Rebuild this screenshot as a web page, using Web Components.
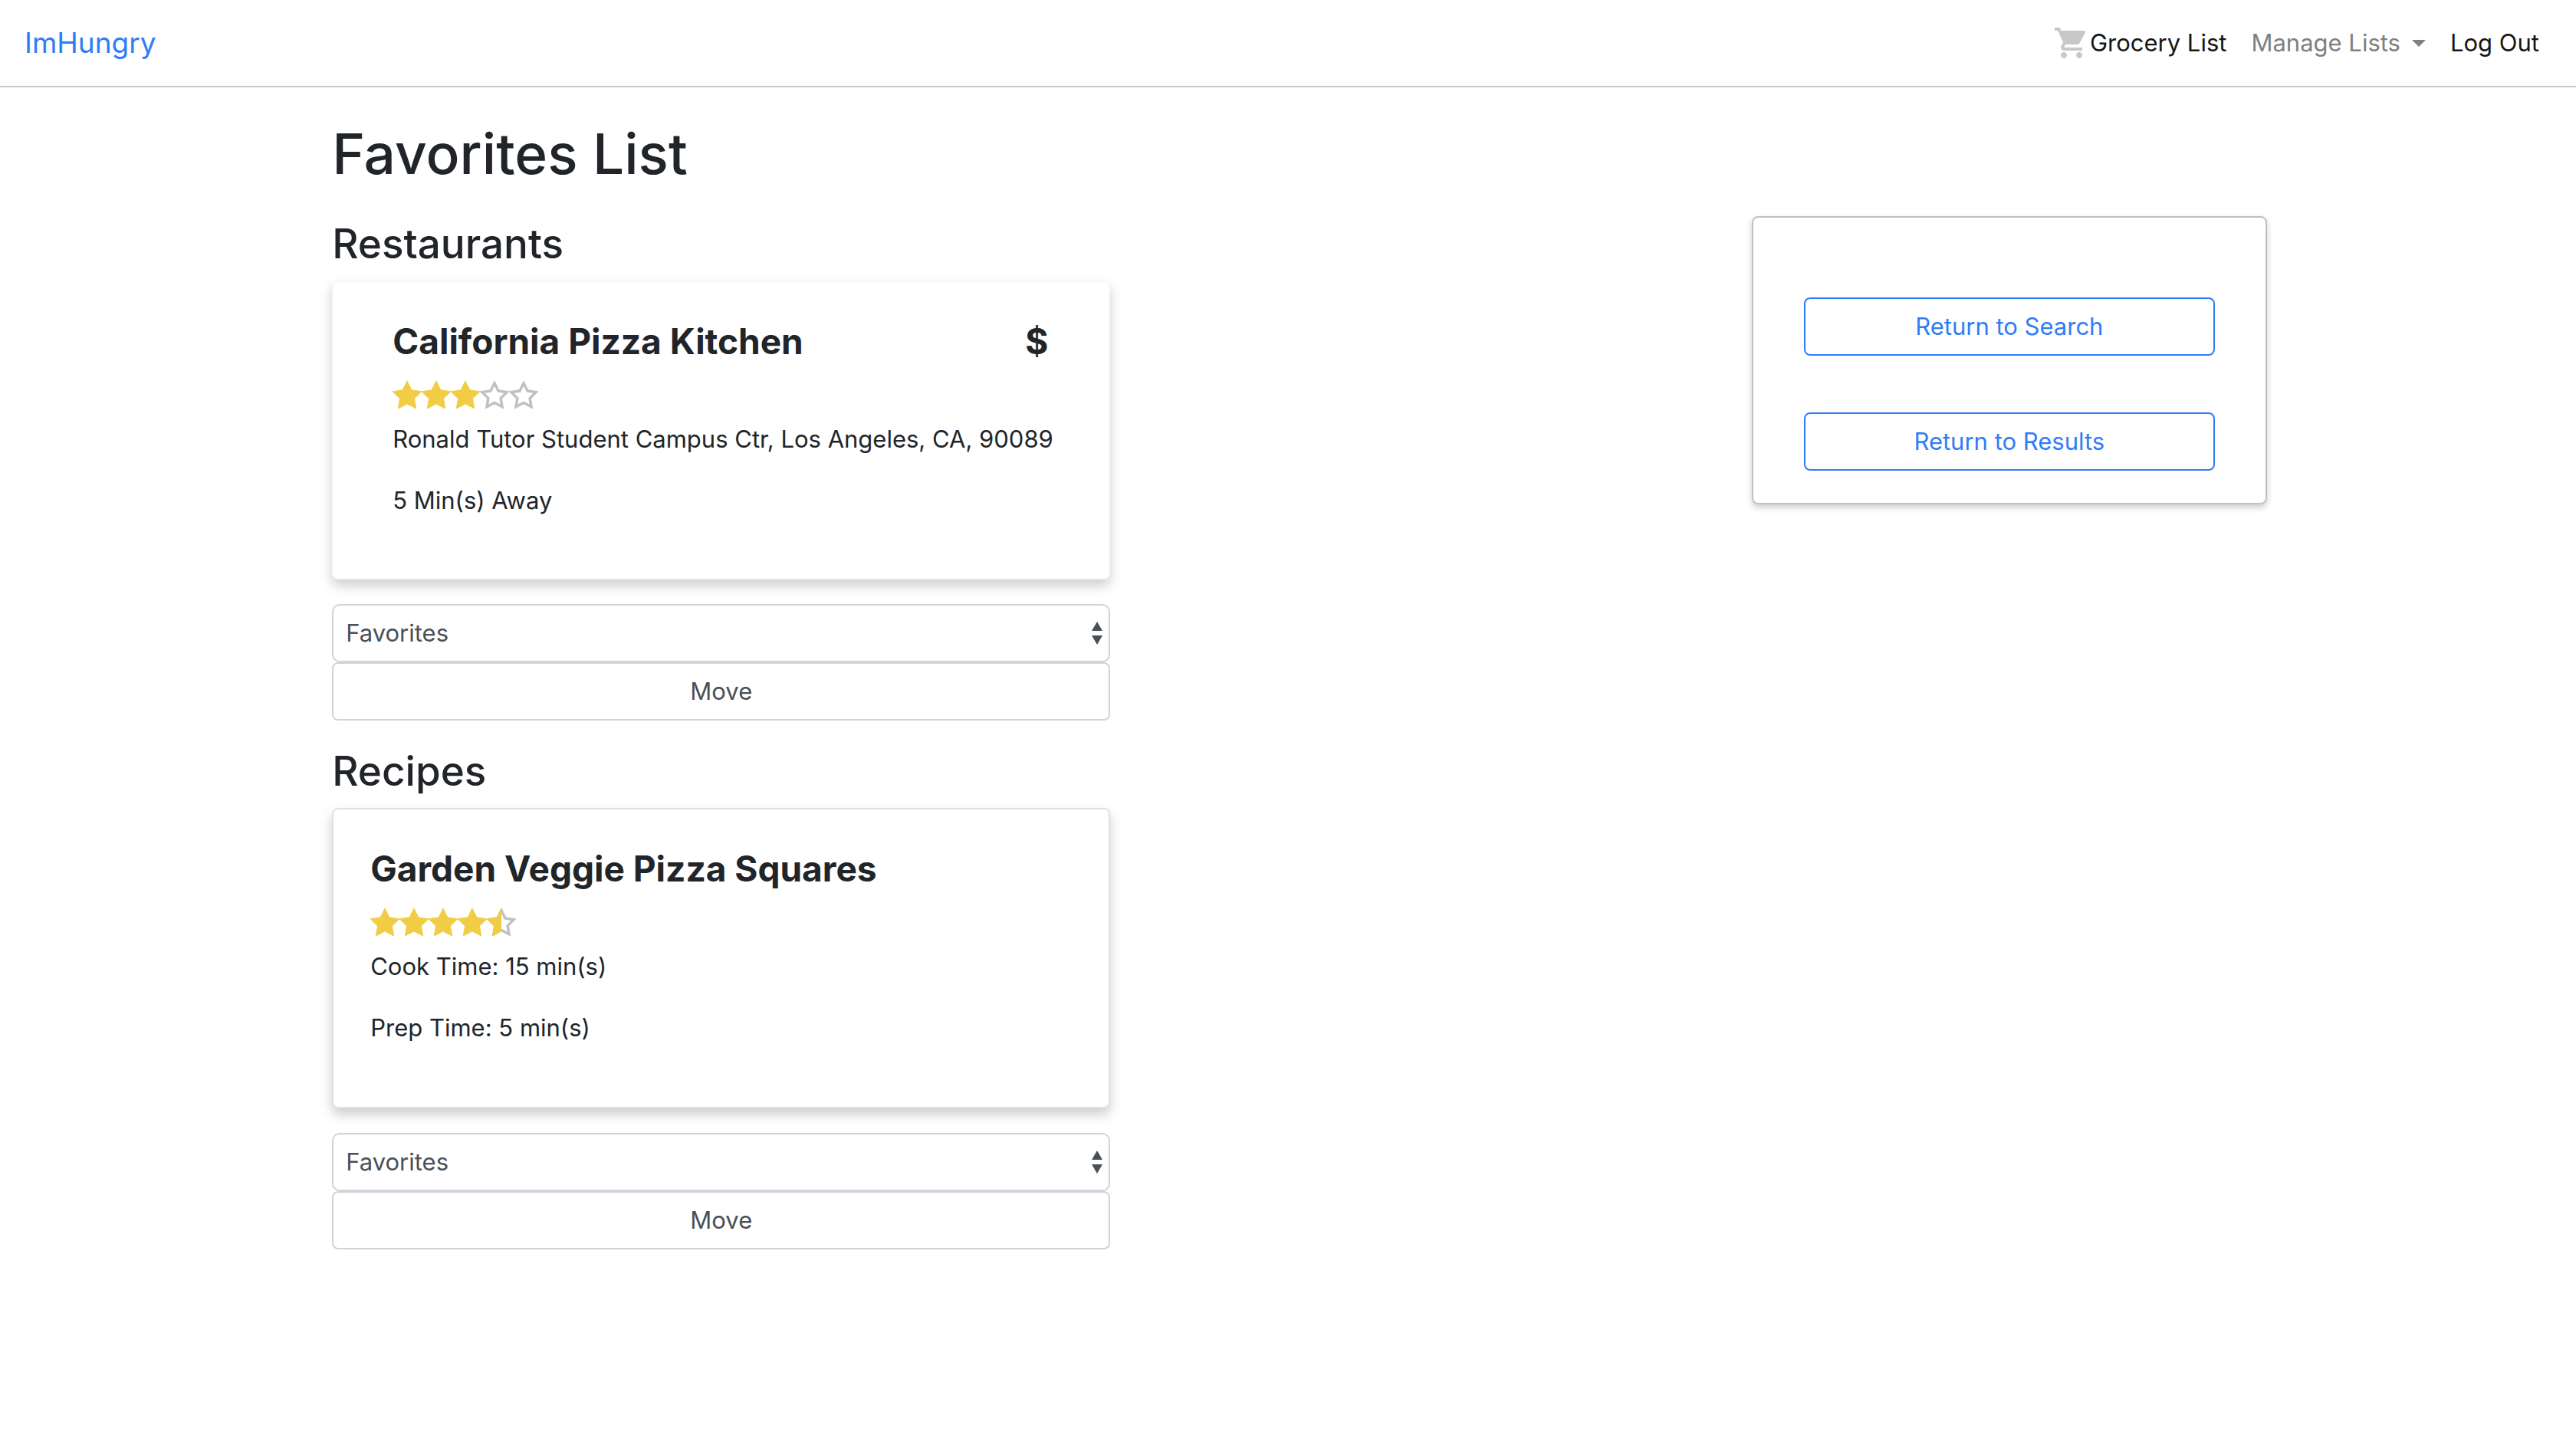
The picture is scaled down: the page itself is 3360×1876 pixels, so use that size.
<!DOCTYPE html>
<html lang="en">
<head>
<meta charset="utf-8">
<title>ImHungry - Favorites List</title>
<style>
  body {
    margin: 0;
    background: #fff;
    color: #212529;
    font: 400 31px/48px Inter, "Liberation Sans", sans-serif;
    --blue: #2f7df6;
    --field: #ced4da;
    --muted: #495057;
  }
</style>
</head>
<body>

<template id="nav-bar">
  <style>
    :host { display: block; border-bottom: 2px solid #c8c8c8; }
    nav { display: flex; align-items: center; justify-content: space-between; padding: 16px 32px; }
    a { color: #161616; text-decoration: none; }
    .brand { color: var(--blue); font-size: 37px; line-height: 60px; }
    ul { display: flex; list-style: none; margin: 0; padding: 0; }
    li a { display: flex; align-items: center; height: 48px; padding: 16px; }
    .cart { width: 48px; height: 48px; fill: #c8c8c8; }
    .menu { color: #808080; }
    .menu::after { content: ""; margin-left: 15px; border: 9px solid transparent; border-top-color: currentColor; border-bottom: 0; }
  </style>
  <nav>
    <a class="brand" href="#">ImHungry</a>
    <ul>
      <li><a href="#grocery"><svg class="cart" viewBox="0 0 24 24" aria-hidden="true"><path d="M7 18c-1.100 0-1.990.9-1.990 2S5.900 22 7 22s2-.9 2-2-.9-2-2-2zM1 2v2h2l3.600 7.590-1.350 2.450c-.16.28-.25.61-.25.96 0 1.100.9 2 2 2h12v-2H7.420c-.14 0-.25-.11-.25-.25l.03-.12.9-1.630h7.450c.75 0 1.410-.41 1.750-1.030l3.580-6.490c.08-.14.12-.31.12-.48 0-.55-.45-1-1-1H5.210l-.94-2H1zm16 16c-1.100 0-1.990.9-1.990 2s.89 2 1.990 2 2-.9 2-2-.9-2-2-2z"/></svg>Grocery List</a></li>
      <li><a class="menu" href="#lists">Manage Lists</a></li>
      <li><a href="#logout">Log Out</a></li>
    </ul>
  </nav>
</template>

<template id="star-rating">
  <style>
    :host { display: flex; }
    svg { width: 38px; height: 38px; overflow: visible; }
    path { stroke-width: 24; }
    .on { fill: #f0cd45; stroke: #f0cd45; }
    .off { fill: #c0c0c0; stroke: #c0c0c0; }
  </style>
</template>

<template id="item-card">
  <style>
    :host { display: block; border: 2px solid #f8f8f8; border-radius: 8px; background: #fff; box-shadow: 0 8px 16px rgba(0, 0, 0, .2); padding: 48px 67px 45px 77px; }
    :host([kind="recipe"]) { border-color: #dee2e6; padding: 48px 48px 47px; }
    header { display: flex; justify-content: space-between; padding-right: 12px; font-size: 46px; line-height: 58px; font-weight: 700; }
    h4 { margin: 0; font: inherit; }
    star-rating { margin: 22px 0 15px; }
    ::slotted(p) { margin: 0 0 32px; }
  </style>
  <header><h4></h4><span class="price"></span></header>
  <star-rating></star-rating>
  <slot></slot>
</template>

<template id="move-form">
  <style>
    :host { display: block; margin-top: 32px; }
    form { display: grid; }
    label { display: grid; align-items: center; }
    select, svg { grid-area: 1 / 1; }
    select, button { box-sizing: border-box; width: 100%; height: 76px; margin: 0; border: 2px solid var(--field); border-radius: 8px; background: #fff; color: var(--muted); font: inherit; }
    select { appearance: none; border-radius: 10px; padding: 12px 16px; }
    svg { justify-self: end; width: 14px; height: 30px; margin-right: 10px; fill: var(--muted); pointer-events: none; }
  </style>
  <form>
    <label>
      <select aria-label="Move to list"><option>Favorites</option><option>To Explore</option><option>Do Not Show</option></select>
      <svg viewBox="0 0 14 30" aria-hidden="true"><path d="M7 0L0 12h14zM7 30L0 18h14z"/></svg>
    </label>
    <button type="button">Move</button>
  </form>
</template>

<template id="list-section">
  <style>
    :host { display: block; }
    h3 { margin: 0 0 12px; font-size: 53px; line-height: 72px; font-weight: 500; }
  </style>
  <h3></h3>
  <slot></slot>
</template>

<template id="side-panel">
  <style>
    :host { display: flex; flex-direction: column; gap: 74px; box-sizing: border-box; width: 20vw; padding: 104px 66px 42px; border: 2px solid #c0c0c0; border-radius: 8px; box-shadow: 0 4px 8px rgba(0, 0, 0, .2); }
    ::slotted(button) { height: 76px; border: 2px solid var(--blue); border-radius: 8px; background: transparent; color: var(--blue); font: inherit; }
  </style>
  <slot></slot>
</template>

<template id="favorites-page">
  <style>
    :host { display: block; }
    main { padding: 39px 12% 64px; }
    h1 { margin: 0 30px 33px; font-size: 73px; line-height: 96px; font-weight: 500; }
    .row { display: flex; justify-content: space-between; align-items: flex-start; }
    .lists { display: flex; flex-direction: column; gap: 30px; width: calc(32vw - 60px); margin-left: 30px; }
  </style>
  <nav-bar></nav-bar>
  <main>
    <h1>Favorites List</h1>
    <div class="row">
      <div class="lists">
        <list-section heading="Restaurants">
          <item-card kind="restaurant" name="California Pizza Kitchen" price="$" stars="3">
            <p>Ronald Tutor Student Campus Ctr, Los Angeles, CA, 90089</p>
            <p>5 Min(s) Away</p>
          </item-card>
          <move-form></move-form>
        </list-section>
        <list-section heading="Recipes">
          <item-card kind="recipe" name="Garden Veggie Pizza Squares" stars="4.5">
            <p>Cook Time: 15 min(s)</p>
            <p>Prep Time: 5 min(s)</p>
          </item-card>
          <move-form></move-form>
        </list-section>
      </div>
      <side-panel>
        <button type="button">Return to Search</button>
        <button type="button">Return to Results</button>
      </side-panel>
    </div>
  </main>
</template>

<favorites-page></favorites-page>

<script>
  class Base extends HTMLElement {
    connectedCallback() {
      if (this.shadowRoot) return;
      const root = this.attachShadow({ mode: 'open' });
      root.append(document.getElementById(this.localName).content.cloneNode(true));
      this.fill(root);
    }
    fill() {}
  }

  const OUTLINE = 'M1024 397.050l-353.780-51.408-158.220-320.582-158.216 320.582-353.784 51.408 256 249.538-60.432 352.352 316.432-166.358 316.432 166.358-60.434-352.352 256.002-249.538z';
  const HOLE = 'M512 753.498l-223.462 117.480 42.676-248.830-180.786-176.222 249.840-36.304 111.732-226.396 111.736 226.396 249.836 36.304-180.788 176.222 42.678 248.830-223.462-117.480z';

  class StarRating extends Base {
    fill(root) {
      const value = Number(this.getAttribute('value'));
      let stars = '';
      for (let i = 0; i < 5; i++) {
        const part = Math.max(0, Math.min(1, value - i));
        stars += '<svg viewBox="0 0 1024 1024" aria-hidden="true">' +
          (part < 1 ? `<path class="off" fill-rule="evenodd" d="${OUTLINE}${HOLE}"/>` : '') +
          (part > 0 ? `<clipPath id="c${i}"><rect x="-20" width="${part < 1 ? 1024 * part + 20 : 1064}" height="1064"/></clipPath><path class="on" clip-path="url(#c${i})" d="${OUTLINE}"/>` : '') +
          '</svg>';
      }
      root.append(document.createRange().createContextualFragment(stars));
    }
  }

  class ItemCard extends Base {
    fill(root) {
      root.querySelector('h4').textContent = this.getAttribute('name');
      root.querySelector('.price').textContent = this.getAttribute('price') || '';
      const rating = document.createElement('star-rating');
      rating.setAttribute('value', this.getAttribute('stars'));
      root.querySelector('star-rating').replaceWith(rating);
    }
  }

  class ListSection extends Base {
    fill(root) { root.querySelector('h3').textContent = this.getAttribute('heading'); }
  }

  customElements.define('star-rating', StarRating);
  customElements.define('item-card', ItemCard);
  customElements.define('list-section', ListSection);
  customElements.define('move-form', class extends Base {});
  customElements.define('nav-bar', class extends Base {});
  customElements.define('side-panel', class extends Base {});
  customElements.define('favorites-page', class extends Base {});
</script>
</body>
</html>
